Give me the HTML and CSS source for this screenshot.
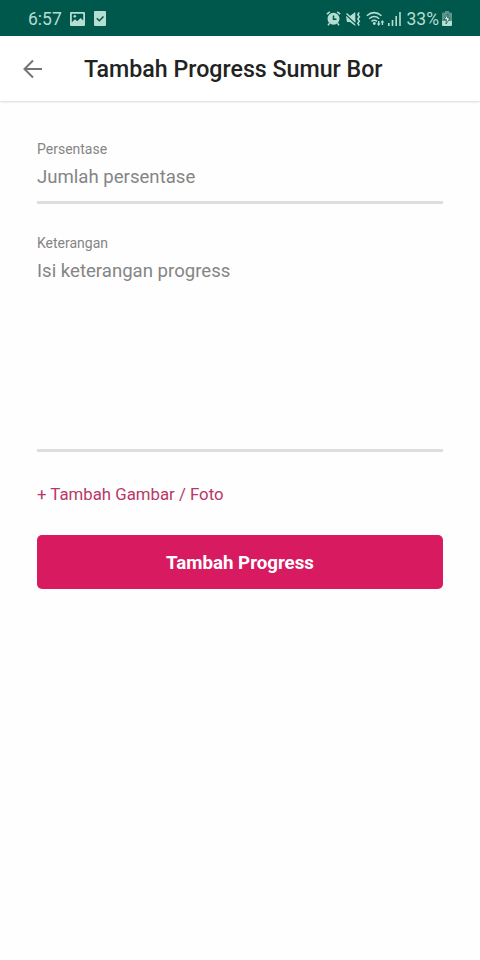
FILE: index.html
```
<!DOCTYPE html>
<html lang="id">
<head>
  <meta charset="UTF-8" />
  <meta name="viewport" content="width=device-width, initial-scale=1.0"/>
  <title>Tambah Progress Sumur Bor</title>
  <link rel="stylesheet" href="styles.css">
</head>
<body>

<div class="status-bar">
  <span class="clock">6:57</span>
  <svg class="icon-image" width="15" height="14" viewBox="0 0 15 14">
    <path fill-rule="evenodd" d="M1 0h13q1 0 1 1v12q0 1-1 1H1q-1 0-1-1V1Q0 0 1 0zM1.800 1.800v8.400L5 7.300l2.200 1.900L10.600 6l2.600 2.500V1.800z"/>
    <circle cx="4.800" cy="4.300" r="1.300"/>
    <path class="tick" d="M2 11.500l3-2.500 2.200 1.900 3.400-3.200 2.500 2.500"/>
  </svg>
  <svg class="icon-check" width="12" height="15" viewBox="0 0 12 15">
    <rect width="12" height="15" rx="1"/>
    <path class="tick" d="M2.800 7.300l2.500 2.500 4.200-4.300"/>
  </svg>

  <div class="status-right">
    <svg class="icon-alarm" width="15" height="15" viewBox="0 0 15 15">
      <circle cx="7.500" cy="7.800" r="6"/>
      <path class="line" d="M.8 3.200L3.800 .8M11.200 .8L14.200 3.200M3.500 12.200L2 14.200M11.500 12.200l1.500 2"/>
      <path class="cut" d="M7.500 4.500V8.300h3"/>
    </svg>
    <svg class="icon-mute" width="16" height="16" viewBox="0 0 16 16">
      <path d="M0 5h4L9.300 1v14L4 11H1z"/>
      <path class="cut" d="M0 3.800L10 13"/>
      <path class="line" d="M.5 2.500L9.300 10.800"/>
      <path class="line" d="M13.200 1.500L11.800 3.800l1.600 2-1.600 2.200 1.600 2.200-1.600 2 1.400 2.300"/>
    </svg>
    <svg class="icon-wifi" width="20" height="16" viewBox="0 0 20 16">
      <path class="line" d="M.8 4.800Q8 -1.600 15.500 4.800M3.200 7.700Q8.200 3.300 13.200 7.700M5.500 10.400Q8.200 8 11 10.400"/>
      <circle cx="8.300" cy="12.500" r="1.400"/>
      <path d="M10.800 12.500h1.200V10h1.400v2.500h1.200L12.700 15zM14.500 11.500L16.400 9l1.900 2.500h-1.200V14h-1.400v-2.500z"/>
    </svg>
    <svg class="icon-signal" width="14" height="15" viewBox="0 0 14 15">
      <path d="M0 12h1.600v3H0zM3.700 9h1.600v6H3.700zM7.400 5h1.600v10H7.400zM11.200 1h1.600v14h-1.600z"/>
    </svg>
    <span class="percent">33%</span>
    <svg class="icon-battery" width="10" height="15" viewBox="0 0 10 15">
      <path class="dim" d="M3 0h4v1.500h2q1 0 1 1V10H0V2.500q0-1 1-1h2z"/>
      <path d="M0 10h10v4q0 1-1 1H1q-1 0-1-1z"/>
      <path class="bolt" d="M6 3L2 8.500h2.500L4 13l4-6H5.500z"/>
    </svg>
  </div>
</div>

<header class="app-bar">
  <button class="back-btn" type="button" aria-label="Kembali">
    <svg width="20" height="20" viewBox="0 0 20 20">
      <path d="M19 10H2M10 1.500L1.500 10l8.500 8.500"/>
    </svg>
  </button>
  <h1>Tambah Progress Sumur Bor</h1>
</header>

<form class="form">
  <div class="field">
    <label for="persentase">Persentase</label>
    <input id="persentase" type="text" placeholder="Jumlah persentase">
  </div>
  <div class="field">
    <label for="keterangan">Keterangan</label>
    <textarea id="keterangan" placeholder="Isi keterangan progress"></textarea>
  </div>
  <button class="add-photo" type="button">+ Tambah Gambar / Foto</button>
  <button class="submit" type="button">Tambah Progress</button>
</form>

</body>
</html>
```
FILE: styles.css
```
* {
  box-sizing: border-box;
}

body {
  margin: 0;
  min-height: 100vh;
  background: #fefefe;
  font-family: Roboto, sans-serif;
}

svg {
  display: block;
  flex: none;
}

button {
  border: none;
  padding: 0;
  font-family: inherit;
  cursor: pointer;
}

/* status bar */
.status-bar {
  display: flex;
  align-items: center;
  height: 36px;
  padding: 1px 28px 0 28px;
  background: #00574b;
  color: #b5ddd2;
  font-size: 17.5px;
}

.status-bar svg {
  fill: #b5ddd2;
}

.status-bar .line {
  fill: none;
  stroke: #b5ddd2;
  stroke-width: 1.5;
}

.status-bar .cut,
.status-bar .tick {
  fill: none;
  stroke: #00574b;
  stroke-width: 1.5;
}

.status-bar .icon-image .tick {
  stroke: none;
}

.icon-image {
  margin-left: 8px;
}

.icon-check {
  margin-left: 9px;
}

.status-right {
  display: flex;
  align-items: center;
  margin-left: auto;
}

.icon-mute {
  margin-left: 5px;
}

.icon-wifi {
  margin-left: 4px;
}

.icon-signal {
  margin-left: 2px;
}

.percent {
  margin-left: 5px;
}

.icon-battery {
  margin-left: 3px;
}

.icon-battery .dim {
  fill: #5b9488;
}

.icon-battery .bolt {
  fill: #e4f5ef;
  stroke: #00574b;
  stroke-width: 0.7;
}

/* title bar */
.app-bar {
  display: flex;
  align-items: center;
  height: 65px;
  padding: 0 23px;
  background: #fff;
  box-shadow: 0 1px 2px rgba(0, 0, 0, 0.15);
}

.back-btn {
  background: transparent;
}

.back-btn svg {
  fill: none;
  stroke: #747474;
  stroke-width: 2;
}

.app-bar h1 {
  margin: 0 0 0 41px;
  color: #222;
  font-size: 23.2px;
  font-weight: 500;
  white-space: nowrap;
}

/* form */
.form {
  display: flex;
  flex-direction: column;
  padding: 40px 37px;
}

.field {
  display: flex;
  flex-direction: column;
  margin-bottom: 31px;
}

.field label {
  color: #858585;
  font-size: 14px;
  line-height: 17px;
}

.field input,
.field textarea {
  width: 100%;
  border: none;
  border-bottom: 3px solid #dedede;
  outline: none;
  padding: 7px 0 0;
  background: transparent;
  font-family: inherit;
  font-size: 18.6px;
  line-height: 24px;
  resize: none;
}

.field input {
  height: 46px;
  padding-bottom: 12px;
}

.field textarea {
  height: 200px;
}

.field ::placeholder {
  color: #858585;
}

.add-photo {
  align-self: flex-start;
  margin-top: 1px;
  background: transparent;
  color: #b83768;
  font-size: 16.8px;
  line-height: 20px;
}

.submit {
  height: 54px;
  margin-top: 31px;
  padding-top: 2px;
  border-radius: 5px;
  background: #d81b60;
  color: #fff;
  font-size: 18.7px;
  font-weight: 700;
}
```
